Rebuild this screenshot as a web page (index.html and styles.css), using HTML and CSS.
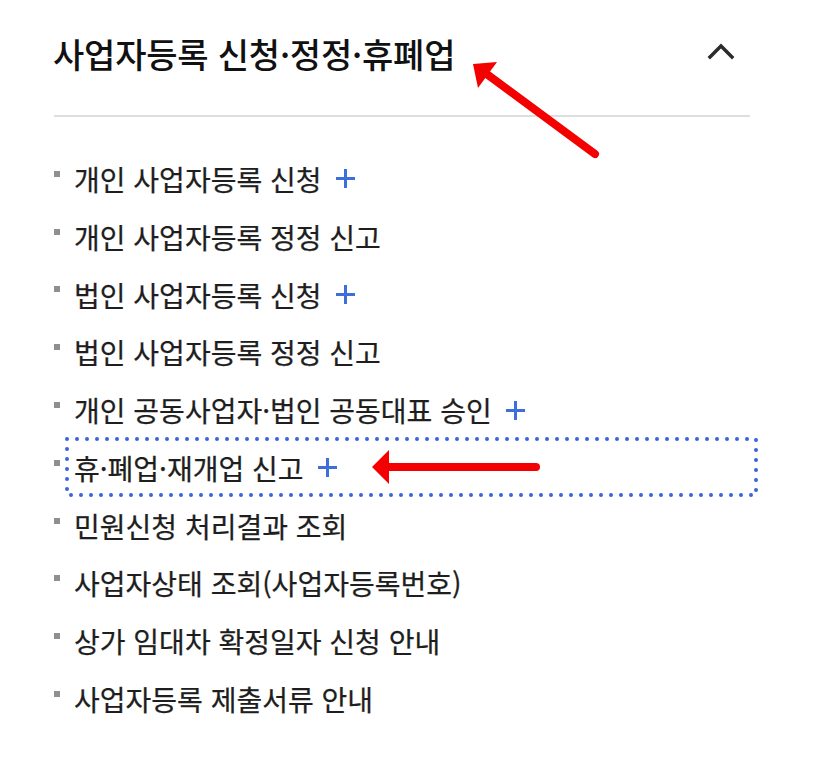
FILE: index.html
```html
<!DOCTYPE html>
<html lang="ko">
<head>
<meta charset="utf-8">
<link rel="stylesheet" href="styles.css">
</head>
<body>
<div class="panel">
  <div class="head">
    <h2 class="title">사업자등록 신청·정정·휴폐업</h2>
    <svg class="chev" width="30" height="20" viewBox="0 0 30 20"><polyline points="3,16 14,5 25,16" fill="none" stroke="#2b2b2b" stroke-width="3.4" stroke-linecap="square"/></svg>
  </div>
  <hr class="rule">
  <ul class="menu">
    <li><a class="link">개인 사업자등록 신청<span class="plus"></span></a></li>
    <li><a class="link">개인 사업자등록 정정 신고</a></li>
    <li><a class="link">법인 사업자등록 신청<span class="plus"></span></a></li>
    <li><a class="link">법인 사업자등록 정정 신고</a></li>
    <li><a class="link">개인 공동사업자·법인 공동대표 승인<span class="plus"></span></a></li>
    <li><a class="link focus">휴·폐업·재개업 신고<span class="plus"></span><svg class="ring" width="693" height="60" viewBox="0 0 693 60"><rect x="2" y="2" width="689" height="56" fill="none" stroke="#3a63d9" stroke-width="4" stroke-linecap="round" stroke-dasharray="0 10"/></svg></a></li>
    <li><a class="link">민원신청 처리결과 조회</a></li>
    <li><a class="link">사업자상태 조회(사업자등록번호)</a></li>
    <li><a class="link">상가 임대차 확정일자 신청 안내</a></li>
    <li><a class="link">사업자등록 제출서류 안내</a></li>
  </ul>
</div>
<svg class="marks" width="830" height="782" viewBox="0 0 830 782">
  <line x1="595" y1="154" x2="488" y2="75" stroke="#f50000" stroke-width="8" stroke-linecap="round"/>
  <polygon points="473,64 497,62 478,88" fill="#f50000"/>
  <line x1="536" y1="467" x2="385" y2="467" stroke="#f50000" stroke-width="8" stroke-linecap="round"/>
  <polygon points="372,467 389,450 389,484" fill="#f50000"/>
</svg>
</body>
</html>
```
FILE: styles.css
```css
* { box-sizing: border-box; }
html, body { margin: 0; padding: 0; background: #fff; }
body {
  width: 830px;
  height: 782px;
  position: relative;
  overflow: hidden;
  font-family: "Noto Sans CJK KR", "Noto Sans", sans-serif;
  color: #222;
}
.panel {
  padding: 26px 0 0 54px;
  width: 757px;
}
.head {
  display: flex;
  align-items: flex-start;
  justify-content: space-between;
  width: 696px;
  height: 56px;
}
.title {
  margin: 0;
  margin-left: -1px;
  font-size: 34px;
  line-height: 56px;
  font-weight: 500;
  color: #111;
  letter-spacing: -0.2px;
}
.chev { margin-right: 13px; margin-top: 15px; }
.rule {
  width: 696px;
  margin: 33px 0 0 0;
  border: 0;
  border-top: 2px solid #dedede;
}
.menu {
  list-style: none;
  margin: 33px 0 0 0;
  padding: 0;
}
.menu li {
  display: flex;
  align-items: center;
  height: 57.8px;
}
.menu li::before {
  content: "";
  width: 6px;
  height: 6px;
  background: #8f8f8f;
  margin-top: -10px;
  flex: none;
}
.link {
  display: flex;
  align-items: center;
  margin-left: 4px;
  padding-left: 10px;
  height: 58px;
  flex: 1;
  font-size: 28px;
  font-weight: 400;
  color: #1e1e1e;
  -webkit-text-stroke: 0.25px #1e1e1e;
}
.focus { position: relative; }
.ring {
  position: absolute;
  left: 1px;
  top: -2px;
  pointer-events: none;
}
.plus {
  position: relative;
  width: 19px;
  height: 19px;
  margin-left: 14px;
  flex: none;
}
.plus::before, .plus::after {
  content: "";
  position: absolute;
  background: #3d6fd9;
}
.plus::before { left: 0; top: 8px; width: 19px; height: 3px; }
.plus::after { top: 0; left: 8px; width: 3px; height: 19px; }
.marks {
  position: absolute;
  left: 0;
  top: 0;
  pointer-events: none;
}
```
